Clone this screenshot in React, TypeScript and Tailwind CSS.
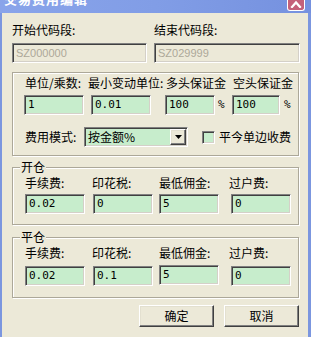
import type { ReactNode } from 'react';

const cjk = "font-['Noto_Sans_CJK_SC','Noto_Sans',sans-serif]";
const mono = "font-['DejaVu_Sans_Mono','Liberation_Mono',monospace]";

const sunken =
  'border border-t-[#808080] border-l-[#808080] border-r-white border-b-white shadow-[inset_1px_1px_0_#404040,inset_-1px_-1px_0_#d4d0c8]';
const raised =
  'border border-t-white border-l-white border-r-[#404040] border-b-[#404040] shadow-[inset_-1px_-1px_0_#808080,inset_1px_1px_0_#e3e0d0]';
const etched = 'border border-[#aca899] shadow-[inset_1px_1px_0_#fff,1px_1px_0_#fff]';

function Field({ value, className = '' }: { value: string; className?: string }) {
  return (
    <div className={`h-[20px] bg-[#c7edcc] ${sunken} flex items-center pl-[3px] text-[11px] text-black ${mono} ${className}`}>
      {value}
    </div>
  );
}

function Label({ children, className = '' }: { children: ReactNode; className?: string }) {
  return <span className={`block shrink-0 text-[12px] leading-[12px] whitespace-nowrap text-black ${cjk} ${className}`}>{children}</span>;
}

function FeeGroup({ title, values, inputGap, pb }: { title: string; values: string[]; inputGap: string; pb: string }) {
  return (
    <div className={`relative w-[287px] ${etched} pt-[9px] ${pb}`}>
      <span className={`absolute left-[7px] -top-[7px] bg-[#ece9d8] px-[1px] text-[12px] leading-[12px] text-black ${cjk}`}>
        {title}
      </span>
      <div className="flex pl-[12px]">
        <Label className="w-[67px]">手续费:</Label>
        <Label className="w-[67px]">印花税:</Label>
        <Label className="w-[70px]">最低佣金:</Label>
        <Label>过户费:</Label>
      </div>
      <div className={`flex items-start pl-[12px] ${inputGap}`}>
        <Field value={values[0]} className="w-[60px]" />
        <Field value={values[1]} className="w-[60px] ml-[8px]" />
        <Field value={values[2]} className={`w-[60px] ml-[6px] ${title === '平仓' ? '-mt-[1px]' : ''}`} />
        <Field value={values[3]} className="w-[60px] ml-[12px]" />
      </div>
    </div>
  );
}

function Button({ children }: { children: ReactNode }) {
  return (
    <div className={`w-[75px] h-[22px] bg-[#ece9d8] ${raised} flex items-center justify-center text-[12px] text-black ${cjk}`}>
      {children}
    </div>
  );
}

export default function App() {
  return (
    <div className="w-[311px] h-[337px] flex flex-col overflow-hidden bg-[#ece9d8]">
      {/* title bar, mostly scrolled off the top */}
      <div className="h-[13px] shrink-0 overflow-hidden flex items-start bg-gradient-to-r from-[#89a4ea] via-[#819de6] to-[#7591df]">
        <span className={`-mt-[8px] ml-[4px] text-[13px] leading-[13px] font-bold text-white tracking-[1px] ${cjk}`}>
          交易费用编辑
        </span>
        <div className="ml-auto mr-[6px] w-[18px] h-[11px] rounded-b-[3px] border border-t-0 border-white bg-[#c4617a] flex justify-center">
          <svg width="12" height="8" viewBox="0 0 12 8">
            <path d="M2 7 L6 2.5 L10 7" stroke="white" strokeWidth="2.2" fill="none" strokeLinecap="square" />
          </svg>
        </div>
      </div>

      <div className="flex-1 border-l-[2px] border-r-[3px] border-[#7b96df] pl-[10px] pr-[8px]">
        <div className="flex mt-[11px]">
          <Label className="w-[142px]">开始代码段:</Label>
          <Label>结束代码段:</Label>
        </div>
        <div className="flex mt-[7px]">
          <div className={`w-[135px] h-[20px] ${sunken} flex items-center pl-[3px] text-[11px] text-[#aca899] font-['Liberation_Sans',sans-serif]`}>
            SZ000000
          </div>
          <div className={`w-[146px] ml-[7px] h-[20px] ${sunken} flex items-center pl-[3px] text-[11px] text-[#aca899] font-['Liberation_Sans',sans-serif]`}>
            SZ029999
          </div>
        </div>

        <div className={`mt-[9px] w-[287px] ${etched} pt-[4px] pb-[8px]`}>
          <div className="flex pl-[12px]">
            <Label className="w-[63px]">单位/乘数:</Label>
            <Label className="w-[78px]">最小变动单位:</Label>
            <Label className="w-[67px]">多头保证金</Label>
            <Label>空头保证金</Label>
          </div>
          <div className="flex items-center pl-[11px] mt-[6px]">
            <Field value="1" className="w-[60px]" />
            <Field value="0.01" className="w-[60px] ml-[7px]" />
            <Field value="100" className="w-[50px] ml-[14px]" />
            <span className={`w-[17px] pl-[3px] text-[11px] ${mono}`}>%</span>
            <Field value="100" className="w-[48px]" />
            <span className={`pl-[4px] text-[11px] ${mono}`}>%</span>
          </div>
          <div className="flex items-center pl-[12px] mt-[12px] h-[20px]">
            <Label className="w-[59px]">费用模式:</Label>
            <div className={`w-[104px] h-[20px] bg-[#c7edcc] ${sunken} flex items-center p-[1px]`}>
              <span className={`flex-1 pl-[2px] text-[12px] leading-[12px] ${cjk}`}>按金额%</span>
              <div className={`w-[16px] h-[16px] bg-[#ece9d8] ${raised} flex items-center justify-center`}>
                <svg width="7" height="4" viewBox="0 0 7 4">
                  <path d="M0 0 H7 L3.5 4 Z" fill="black" />
                </svg>
              </div>
            </div>
            <div className={`ml-[14px] w-[13px] h-[13px] bg-[#c7edcc] ${sunken}`} />
            <Label className="ml-[4px]">平今单边收费</Label>
          </div>
        </div>

        <div className="mt-[11px]">
          <FeeGroup title="开仓" values={['0.02', '0', '5', '0']} inputGap="mt-[5px]" pb="pb-[10px]" />
        </div>
        <div className="mt-[12px]">
          <FeeGroup title="平仓" values={['0.02', '0.1', '5', '0']} inputGap="mt-[7px]" pb="pb-[11px]" />
        </div>

        <div className="flex justify-end gap-[10px] mt-[7px] pr-[1px]">
          <Button>确定</Button>
          <Button>取消</Button>
        </div>
      </div>
    </div>
  );
}
